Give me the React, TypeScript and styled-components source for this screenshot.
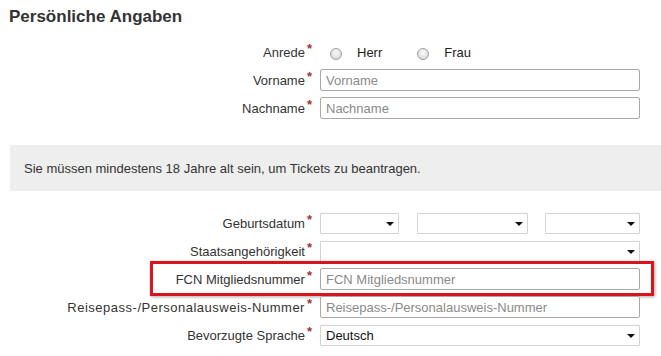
import React from 'react';
import styled, { createGlobalStyle } from 'styled-components';

const GlobalStyle = createGlobalStyle`
  html, body {
    margin: 0;
    padding: 0;
    background: #fff;
  }
  body {
    font-family: "Liberation Sans", Arial, sans-serif;
    font-size: 13px;
    color: #333;
  }
`;

const Page = styled.div`
  width: 661px;
  overflow: hidden;
  padding-top: 6px;
`;

const Title = styled.h2`
  margin: 0 0 0 9px;
  font-size: 17px;
  line-height: 21px;
  font-weight: bold;
  color: #333;
`;

const Fieldset = styled.div<{ $top: number }>`
  display: flex;
  flex-direction: column;
  gap: 6px;
  margin-top: ${(p) => p.$top}px;
`;

const Row = styled.div`
  position: relative;
  display: grid;
  grid-template-columns: 312px 320px;
  column-gap: 8px;
  align-items: center;
  height: 22px;
`;

const Label = styled.label<{ $wide?: boolean }>`
  display: flex;
  justify-content: flex-end;
  align-items: center;
  white-space: nowrap;
  color: #333;
  font-size: 13px;
  letter-spacing: ${(p) => (p.$wide ? '0.5px' : '0')};
`;

const Star = styled.span`
  color: #a83232;
  font-size: 13px;
  font-weight: bold;
  letter-spacing: 0;
  margin-left: 2px;
  position: relative;
  top: -4px;
`;

const TextInput = styled.input`
  box-sizing: border-box;
  width: 320px;
  height: 22px;
  margin: 0;
  padding: 0 5px;
  border: 1px solid #a9a9a9;
  border-radius: 2px;
  font-family: "Liberation Sans", Arial, sans-serif;
  font-size: 13px;
  color: #333;
  background: #fff;
  outline: none;

  &::placeholder {
    color: #8a8a8a;
  }
`;

const SelectGroup = styled.div`
  display: flex;
  justify-content: space-between;
  width: 320px;
`;

const SelectWrap = styled.div<{ $w: number }>`
  position: relative;
  width: ${(p) => p.$w}px;
  height: 21px;

  &::after {
    content: '';
    position: absolute;
    right: 5px;
    top: 9px;
    border-left: 4px solid transparent;
    border-right: 4px solid transparent;
    border-top: 4px solid #111;
    pointer-events: none;
  }
`;

const Select = styled.select`
  appearance: none;
  box-sizing: border-box;
  width: 100%;
  height: 100%;
  margin: 0;
  padding: 0 5px;
  border: 1px solid #d3d3d3;
  border-radius: 1px;
  background: #fff;
  font-family: "Liberation Sans", Arial, sans-serif;
  font-size: 13px;
  color: #111;
  outline: none;
`;

const RadioGroup = styled.div`
  display: flex;
  align-items: center;
  padding-left: 10px;
`;

const RadioOption = styled.label`
  display: flex;
  align-items: center;
  gap: 15px;
  margin-right: 35px;
  color: #222;
  font-size: 13px;
`;

const Radio = styled.input`
  appearance: none;
  margin: 3px 0 0 0;
  width: 12px;
  height: 12px;
  border-radius: 50%;
  border: 1px solid #a0a0a0;
  background: radial-gradient(circle at 50% 40%, #fafafa 0%, #e4e4e4 55%, #c8c8c8 100%);
  box-sizing: border-box;
`;

const Notice = styled.div`
  margin: 26px 0 0 10px;
  height: 46px;
  box-sizing: border-box;
  padding-left: 14px;
  display: flex;
  align-items: center;
  background: #eeeeee;
  color: #333;
  font-size: 13px;
`;

const Highlight = styled.div`
  position: absolute;
  left: 150px;
  top: -7px;
  width: 504px;
  height: 35px;
  box-sizing: border-box;
  border: 3px solid #d9141c;
  box-shadow: 1px 1px 3px rgba(0, 0, 0, 0.35);
  pointer-events: none;
`;

const Req = ({ children, wide }: { children: React.ReactNode; wide?: boolean }) => (
  <Label $wide={wide}>
    {children}
    <Star>*</Star>
  </Label>
);

export default function App() {
  return (
    <Page>
      <GlobalStyle />
      <Title>Persönliche Angaben</Title>

      <Fieldset $top={14}>
        <Row>
          <Req>Anrede</Req>
          <RadioGroup>
            <RadioOption>
              <Radio type="radio" name="anrede" />
              Herr
            </RadioOption>
            <RadioOption>
              <Radio type="radio" name="anrede" />
              Frau
            </RadioOption>
          </RadioGroup>
        </Row>
        <Row>
          <Req>Vorname</Req>
          <TextInput placeholder="Vorname" />
        </Row>
        <Row>
          <Req>Nachname</Req>
          <TextInput placeholder="Nachname" />
        </Row>
      </Fieldset>

      <Notice>Sie müssen mindestens 18 Jahre alt sein, um Tickets zu beantragen.</Notice>

      <Fieldset $top={21}>
        <Row>
          <Req>Geburtsdatum</Req>
          <SelectGroup>
            <SelectWrap $w={79}>
              <Select defaultValue="">
                <option value=""></option>
              </Select>
            </SelectWrap>
            <SelectWrap $w={111}>
              <Select defaultValue="">
                <option value=""></option>
              </Select>
            </SelectWrap>
            <SelectWrap $w={95}>
              <Select defaultValue="">
                <option value=""></option>
              </Select>
            </SelectWrap>
          </SelectGroup>
        </Row>
        <Row>
          <Req>Staatsangehörigkeit</Req>
          <SelectWrap $w={320}>
            <Select defaultValue="">
              <option value=""></option>
            </Select>
          </SelectWrap>
        </Row>
        <Row>
          <Req>FCN Mitgliedsnummer</Req>
          <TextInput placeholder="FCN Mitgliedsnummer" />
          <Highlight />
        </Row>
        <Row>
          <Req wide>Reisepass-/Personalausweis-Nummer</Req>
          <TextInput placeholder="Reisepass-/Personalausweis-Nummer" />
        </Row>
        <Row>
          <Req>Bevorzugte Sprache</Req>
          <SelectWrap $w={320}>
            <Select defaultValue="de">
              <option value="de">Deutsch</option>
            </Select>
          </SelectWrap>
        </Row>
      </Fieldset>
    </Page>
  );
}
